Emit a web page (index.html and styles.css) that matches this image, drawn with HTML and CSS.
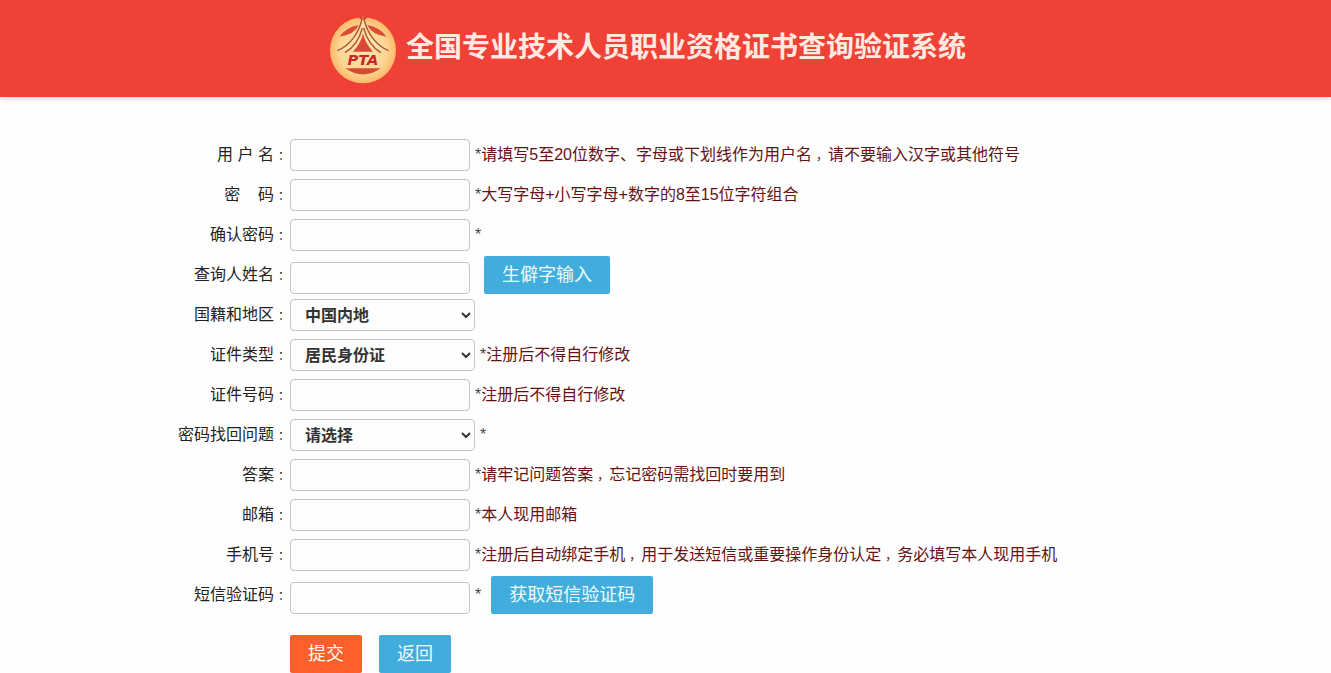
FILE: index.html
```html
<!DOCTYPE html>
<html lang="zh-CN">
<head>
<meta charset="utf-8">
<meta name="viewport" content="width=device-width, initial-scale=1">
<title>全国专业技术人员职业资格证书查询验证系统</title>
<link rel="stylesheet" href="styles.css">
</head>
<body>
<header class="site-header">
  <svg class="logo" viewBox="0 0 198 204" aria-label="PTA" role="img">
    <defs>
      <radialGradient id="gold" cx="50%" cy="50%" r="52%">
        <stop offset="0" stop-color="#ffe3ac"/>
        <stop offset="0.7" stop-color="#ffd592"/>
        <stop offset="1" stop-color="#fbb463"/>
      </radialGradient>
    </defs>
    <circle cx="99" cy="103" r="99" fill="url(#gold)"/>
    <path d="M85 0L113 0L108 10L90 10Z" fill="#ef4136"/>
    <path d="M28 62Q48 34 86 27Q74 56 28 62ZM170 62Q150 34 112 27Q124 56 170 62Z" fill="#dc4b32"/>
    <path d="M99 0C92 35 72 86 22 106C62 106 84 76 99 38C114 76 136 106 176 106C126 86 106 35 99 0Z" fill="#ffe0a9"/>
    <path d="M97 6C88 48 62 88 22 104M101 6C110 48 136 88 176 104" fill="none" stroke="#a9542f" stroke-width="4"/>
    <path d="M97 36C88 70 69 96 45 110M101 36C110 70 129 96 153 110" fill="none" stroke="#a9542f" stroke-width="4"/>
    <path d="M99 53Q105 80 129 107H69Q93 80 99 53Z" fill="#d84a37"/>
    <text x="99" y="147" text-anchor="middle" class="logo-text">PTA</text>
    <path d="M46 157H152Q99 194 46 157Z" fill="#d24d31"/>
  </svg>
  <h1 class="site-title">全国专业技术人员职业资格证书查询验证系统</h1>
</header>
<main>
<form class="register">
  <div class="row">
    <label class="label" for="user">用 户 名<span class="mid">：</span></label>
    <input class="field" id="user" type="text">
    <p class="hint"><i class="star">*</i>请填写5至20位数字、字母或下划线作为用户名<span class="mid">，</span>请不要输入汉字或其他符号</p>
  </div>
  <div class="row">
    <label class="label" for="pwd">密&nbsp;&nbsp;&nbsp; 码<span class="mid">：</span></label>
    <input class="field" id="pwd" type="password">
    <p class="hint"><i class="star">*</i>大写字母+小写字母+数字的8至15位字符组合</p>
  </div>
  <div class="row">
    <label class="label" for="pwd2">确认密码<span class="mid">：</span></label>
    <input class="field" id="pwd2" type="password">
    <p class="hint"><i class="star">*</i></p>
  </div>
  <div class="row">
    <label class="label" for="name">查询人姓名<span class="mid">：</span></label>
    <div class="group">
      <input class="field" id="name" type="text">
      <button class="btn rare" type="button">生僻字输入</button>
    </div>
  </div>
  <div class="row">
    <label class="label" for="region">国籍和地区<span class="mid">：</span></label>
    <select class="field select" id="region"><option>中国内地</option></select>
  </div>
  <div class="row">
    <label class="label" for="idtype">证件类型<span class="mid">：</span></label>
    <select class="field select" id="idtype"><option>居民身份证</option></select>
    <p class="hint"><i class="star">*</i>注册后不得自行修改</p>
  </div>
  <div class="row">
    <label class="label" for="idno">证件号码<span class="mid">：</span></label>
    <input class="field" id="idno" type="text">
    <p class="hint"><i class="star">*</i>注册后不得自行修改</p>
  </div>
  <div class="row">
    <label class="label" for="question">密码找回问题<span class="mid">：</span></label>
    <select class="field select" id="question"><option>请选择</option></select>
    <p class="hint"><i class="star">*</i></p>
  </div>
  <div class="row">
    <label class="label" for="answer">答案<span class="mid">：</span></label>
    <input class="field" id="answer" type="text">
    <p class="hint"><i class="star">*</i>请牢记问题答案<span class="mid">，</span>忘记密码需找回时要用到</p>
  </div>
  <div class="row">
    <label class="label" for="email">邮箱<span class="mid">：</span></label>
    <input class="field" id="email" type="email">
    <p class="hint"><i class="star">*</i>本人现用邮箱</p>
  </div>
  <div class="row">
    <label class="label" for="phone">手机号<span class="mid">：</span></label>
    <input class="field" id="phone" type="tel">
    <p class="hint"><i class="star">*</i>注册后自动绑定手机<span class="mid">，</span>用于发送短信或重要操作身份认定<span class="mid">，</span>务必填写本人现用手机</p>
  </div>
  <div class="row">
    <label class="label" for="code">短信验证码<span class="mid">：</span></label>
    <div class="group">
      <input class="field" id="code" type="text">
      <p class="hint code-hint"><i class="star">*</i></p>
      <button class="btn sms" type="button">获取短信验证码</button>
    </div>
  </div>
  <div class="actions">
    <button class="btn submit" type="submit">提交</button>
    <button class="btn" type="button">返回</button>
  </div>
</form>
</main>
</body>
</html>
```
FILE: styles.css
```css
* {
  box-sizing: border-box;
}

body {
  margin: 0;
  background: #fefefe;
  color: #222;
  font-family: "Liberation Sans", "Noto Sans CJK SC", sans-serif;
  font-size: 16px;
  line-height: 24px;
}

.site-header {
  display: flex;
  justify-content: center;
  align-items: center;
  gap: 10px;
  padding: 16px 35px 13px 0;
  background: #ef4136;
  box-shadow: 0 1px 5px rgba(239, 65, 54, 0.35);
}

.logo {
  width: 66px;
  height: 68px;
}

.logo-text {
  font: italic bold 44px "DejaVu Sans", sans-serif;
  fill: #c8262c;
}

.site-title {
  margin: 0;
  padding-bottom: 4px;
  color: #ffe9e0;
  font-size: 28px;
  font-weight: bold;
  line-height: 40px;
  white-space: nowrap;
}

.register {
  padding-top: 38px;
}

.row {
  display: flex;
  align-items: center;
  height: 40px;
}

.label {
  flex: none;
  width: 290px;
  text-align: right;
}

/* Smaller full-width punctuation, padded to a full character cell */
.mid {
  padding-left: 4px;
  font-size: 12px;
}

.field {
  flex: none;
  width: 180px;
  height: 32px;
  padding: 0 10px;
  border: 1px solid #c4c4c4;
  border-radius: 4px;
  background: #fefefe;
  color: #333;
  font: inherit;
}

.select {
  width: 185px;
  padding: 0 0 0 10px;
  font-weight: bold;
}

.hint {
  margin: 0 0 0 5px;
  color: #661212;
  white-space: nowrap;
}

.star {
  color: #444;
  font-style: normal;
}

.group {
  display: flex;
  align-items: flex-end;
}

.btn {
  height: 38px;
  padding: 0 18px;
  border: 0;
  border-radius: 2px;
  background: #41addd;
  color: #effcfa;
  font: inherit;
  font-size: 18px;
  line-height: 36px;
}

.rare {
  margin-left: 14px;
}

.sms {
  margin-left: 10px;
}

.code-hint {
  align-self: center;
}

.submit {
  background: #ff5f2b;
}

.actions {
  display: flex;
  gap: 17px;
  padding: 20px 0 0 290px;
}
```
